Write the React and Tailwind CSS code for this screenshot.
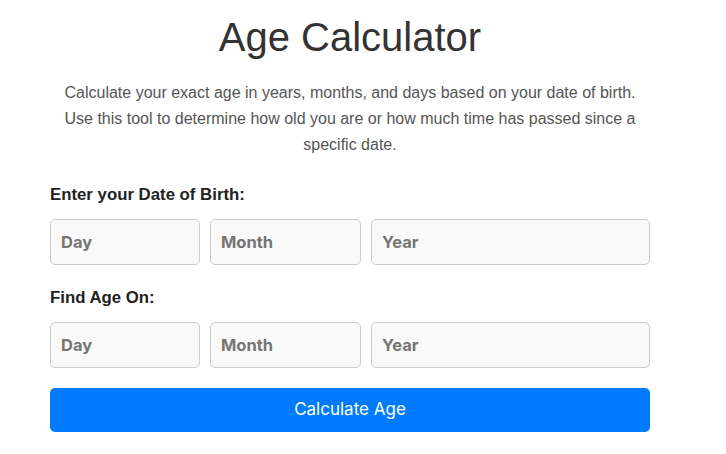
import React from 'react'

const inputCls =
  'h-[46px] rounded-[5px] border border-[#cccccc] bg-[#f9f9f9] px-[10px] text-[16.5px] font-bold text-[#333] placeholder:text-[#757575] outline-none font-["Inter",sans-serif]'

function DateRow() {
  return (
    <div className="flex gap-[10px]">
      <input className={`${inputCls} w-[150px]`} placeholder="Day" />
      <input className={`${inputCls} w-[151px]`} placeholder="Month" />
      <input className={`${inputCls} flex-1 min-w-0`} placeholder="Year" />
    </div>
  )
}

export default function App() {
  return (
    <div className="min-h-screen bg-white font-['Liberation_Sans',Arial,sans-serif]">
      <div className="ml-[50px] w-[600px] pt-[14px]">
        <h1 className="text-center text-[40px] leading-[46px] text-[#333333]">Age Calculator</h1>
        <p className="mt-[20px] text-center text-[16px] leading-[26px] text-[#555555]">
          Calculate your exact age in years, months, and days based on your date of birth. Use this tool to determine how old you are or how much time has passed since a specific date.
        </p>

        <div className="mt-[28px] text-[16.8px] font-bold leading-[18px] text-[#222]">Enter your Date of Birth:</div>
        <div className="mt-[15px]">
          <DateRow />
        </div>

        <div className="mt-[24px] text-[16.8px] font-bold leading-[18px] text-[#222]">Find Age On:</div>
        <div className="mt-[15px]">
          <DateRow />
        </div>

        <button className="mt-[20px] h-[44px] w-full rounded-[5px] bg-[#007bff] text-[17px] text-white font-['Inter',sans-serif]">
          Calculate Age
        </button>
      </div>
    </div>
  )
}
